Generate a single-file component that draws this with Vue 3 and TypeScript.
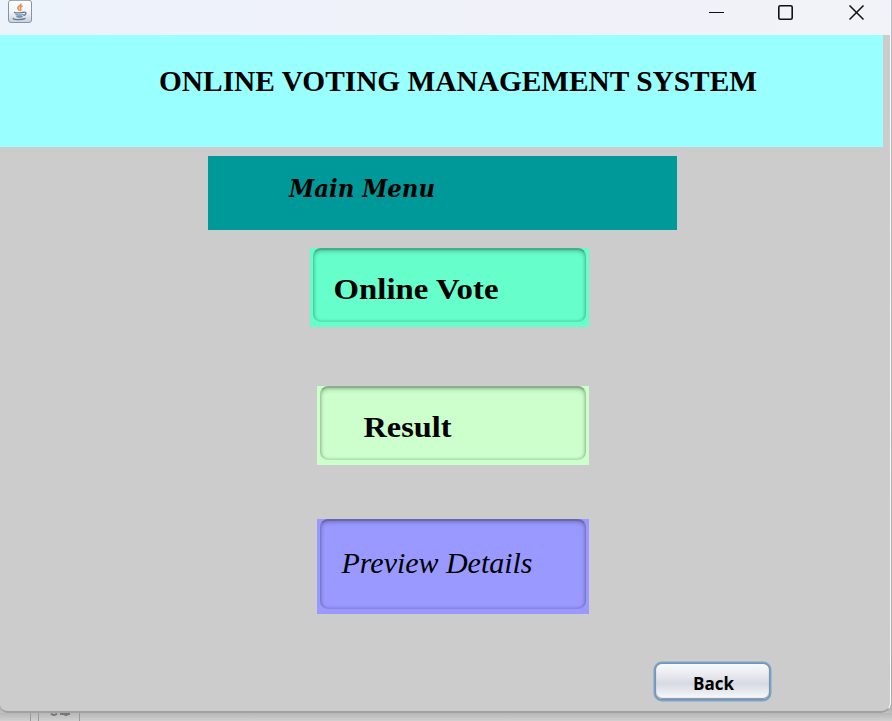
<script setup lang="ts">
interface MenuItem {
  label: string
  kind: string
  x: number
  y: number
  width: number
}

const items: MenuItem[] = [
  { label: 'Online Vote', kind: 'vote', x: 20, y: 49, width: 165 },
  { label: 'Result', kind: 'result', x: 43, y: 49, width: 88 },
  { label: 'Preview Details', kind: 'preview', x: 21, y: 52, width: 191 },
]
</script>

<template>
  <div class="desktop">
    <main class="window">
      <header class="titlebar">
        <svg class="java" width="24" height="24" viewBox="0 0 24 24" fill="none">
          <defs>
            <linearGradient id="tile" x1="0" y1="0" x2="0" y2="1">
              <stop offset="0" stop-color="#fff" />
              <stop offset=".55" stop-color="#f1f3f5" />
              <stop offset="1" stop-color="#c9d0d9" />
            </linearGradient>
          </defs>
          <rect x=".5" y=".3" width="23" height="22.2" rx="2.5" fill="url(#tile)" stroke="#8495a8" />
          <path d="M13 3.500c1 2.200-4.500 3.200-3 5.200.4.700 1 1.300 1.200 2M14.500 6c-2 .8-3 1.800-1.800 3 .6.800.4 1.300-.5 2" stroke="#e28a45" stroke-width="1.500" />
          <path d="M6 12.300c2 .8 7.500.7 10-.1M7.500 14.500c2.400.8 5.600.7 7.800 0M8.500 16.500c2 .7 4.200.6 6 0M16 12.300c3-.6 2.500 2.500-.5 3.200M5.500 18c-2 1.800 8 2.200 12 .4" stroke="#587b9b" stroke-width="1.300" />
        </svg>
        <div class="controls">
          <svg width="16" height="16" viewBox="0 0 16 16"><path d="M0 7.500h15" stroke="#111" /></svg>
          <svg width="16" height="16" viewBox="0 0 16 16"><rect x=".8" y=".8" width="13.400" height="13.400" rx="1.500" fill="none" stroke="#111" stroke-width="1.600" /></svg>
          <svg width="16" height="16" viewBox="0 0 16 16"><path d="M.5.500l14 14M14.500.5l-14 14" stroke="#111" stroke-width="1.500" /></svg>
        </div>
      </header>

      <section class="client">
        <div class="banner">
          <svg width="883" height="112">
            <text class="title" x="159" y="56" textLength="598" lengthAdjust="spacingAndGlyphs">ONLINE VOTING MANAGEMENT SYSTEM</text>
          </svg>
        </div>
        <div class="menu-heading">
          <svg width="469" height="74">
            <text class="subtitle" x="81" y="41" textLength="146" lengthAdjust="spacingAndGlyphs">Main Menu</text>
          </svg>
        </div>
        <nav class="menu">
          <button v-for="item in items" :key="item.kind" class="item" :class="item.kind">
            <span class="bevel">
              <svg width="100%" height="100%">
                <text :x="item.x - 0.5" :y="item.y" :textLength="item.width" lengthAdjust="spacingAndGlyphs">{{ item.label }}</text>
              </svg>
            </span>
          </button>
        </nav>
        <button class="back">
          <svg width="113" height="35">
            <text x="37" y="25.5" textLength="41" lengthAdjust="spacingAndGlyphs">Back</text>
          </svg>
        </button>
      </section>
    </main>
    <div class="behind">
      <svg width="100" height="8" fill="none">
        <path d="M30.500 0v8M38.500 0v8M79.500 0v8" stroke="#999" />
        <path d="M51 .5q3 3 6 0M60 1h10" stroke="#777" stroke-width="1.800" />
        <path d="M66 1v2" stroke="#777" stroke-width="3" />
      </svg>
    </div>
  </div>
</template>

<style>
body { margin: 0; overflow: hidden; }
</style>

<style scoped>
.desktop { width: 892px; height: 721px; overflow: hidden; background: linear-gradient(#bcbcbc 0, #aaa 98%, #c5c5c5 99%, #cfcfcf 100%); }
.window { box-sizing: border-box; width: 891px; height: 713px; overflow: hidden; background: #ccc; border-right: 1px solid #f8f8f8; border-bottom: 2px solid #a1a1a1; border-radius: 0 0 10px 8px; }
.titlebar { display: flex; justify-content: space-between; box-sizing: border-box; height: 35px; padding: 0 25px 0 8px; background: linear-gradient(90deg, #edf3fb, #f1f2f9 60%, #f2f2f9); }
.controls { display: flex; gap: 55px; padding-top: 5px; }
.controls svg:nth-child(2) { margin-left: -2px; }
svg { display: block; }
.client { display: flex; flex-direction: column; height: 676px; }
.banner { width: 883px; height: 112px; background: #9ff; }
text { fill: #000; }
.title { font: bold 28.500px "Liberation Serif", serif; }
.menu-heading { width: 469px; height: 74px; margin: 9px 0 0 208px; background: #099; }
.subtitle { font: italic bold 23.500px "DejaVu Serif", serif; }
.menu { display: flex; flex-direction: column; align-items: flex-end; width: 589px; margin-top: 18px; }
.item { display: block; box-sizing: border-box; width: 272px; height: 79px; padding: 0 3px 5px; border: 0; border-radius: 0; }
.bevel { display: block; box-sizing: border-box; width: 100%; height: 100%; overflow: hidden; border: 1px solid rgba(0, 0, 0, .2); border-top: 2px solid rgba(0, 0, 0, .32); border-bottom-color: rgba(0, 0, 0, .12); border-radius: 8px; box-shadow: inset 0 2px 4px rgba(0, 0, 0, .16), inset 0 0 3px rgba(0, 0, 0, .18); }
.item text { font: bold 28.500px "Liberation Serif", serif; }
.vote { width: 279px; background: #6fc; }
.result { margin-top: 59px; background: #cfc; }
.preview { height: 95px; margin-top: 54px; background: #99f; }
.item.preview text { font: italic 28.500px "Liberation Serif", serif; }
.back { width: 113px; height: 35px; margin: 50px 0 0 655.500px; padding: 0; border: 0; border-radius: 6px; background: linear-gradient(#fafafb 0, #e6e8ed 35%, #d7dae1 56%, #e4e7ec 75%, #fafbfd 100%); box-shadow: 0 0 0 1px #7894af, 0 0 0 2.500px #79a3c8, inset 0 -1px 1px #8693a3; }
.back text { font: bold 18px "Open Sans", sans-serif; }
.behind { height: 8px; overflow: hidden; background: linear-gradient(#b7b7b7, #d0d0d0); }
</style>
